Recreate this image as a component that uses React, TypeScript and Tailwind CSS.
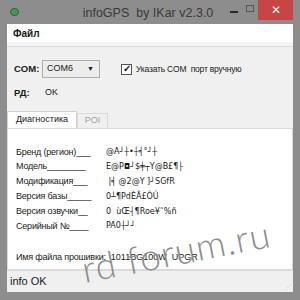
import React from 'react';

const rows = [
  ['Бренд (регион)___', '@A┘┼•┼╡°┘┼'],
  ['Модель________', 'E@P◘┘$╪┬Y@B£¶├'],
  ['Модификация___', ' |╡ @2@Y ]┘SGfR'],
  ['Версия базы_____', '0┴¶PdÈÂ£ÔÛ'],
  ['Версия озвучки__', '0  ùŒ┤¶Roe¥˜%ñ'],
  ['Серийный №____', 'PA0┼┘┘'],
];

const App = () => {
  return (
    <div className="relative w-[300px] h-[300px] overflow-hidden bg-[#8d8d8d] flex flex-col font-['Liberation_Sans',sans-serif] text-[#1a1a1a]">
      {/* title bar */}
      <div className="h-[24px] flex items-start shrink-0">
        <div className="mt-[8px] ml-[10px] w-[9px] h-[8px] rounded-full bg-[#3f9a4a] border border-[#2c6b33]" />
        <div className="flex-1 text-center text-[12.5px] leading-[26px] text-[#3a3a3a] pl-[52px]">infoGPS&nbsp; by IKar v2.3.0</div>
        <div className="w-[18px] mt-[11px] flex justify-center">
          <div className="w-[8px] h-[2px] bg-[#2a2a2a]" />
        </div>
        <div className="w-[14px] mt-[5px] flex justify-center">
          <div className="w-[8px] h-[7px] border border-[#555]" />
        </div>
        <div className="w-[35px] h-[20px] ml-[1px] mr-[7px] bg-[#c94545] flex items-center justify-center text-white text-[12px] leading-none">✕</div>
      </div>

      {/* client */}
      <div className="flex-1 mx-[7px] mb-[8px] bg-[#f0f0f0] flex flex-col text-[9px]">
        <div className="h-[18px] bg-white flex items-center pl-[6px] font-bold text-[10px]">Файл</div>
        <div className="h-[5px] border-b border-[#dcdcdc] bg-[#f4f4f4]" />

        <div className="flex items-center mt-[13px] pl-[7px] h-[18px]">
          <span className="font-bold w-[28px] text-[9.5px]">COM:</span>
          <div className="w-[58px] h-[18px] border border-[#acacac] bg-[#ececec] flex items-center justify-between pl-[4px] pr-[5px]">
            <span>COM6</span>
            <span className="text-[7px]">▼</span>
          </div>
          <div className="ml-[21px] w-[11px] h-[11px] border border-[#555] bg-white flex items-center justify-center text-[10px] leading-none font-bold">✓</div>
          <span className="ml-[4px] text-[8.5px] tracking-[-0.2px]">Указать COM&nbsp; порт вручную</span>
        </div>

        <div className="flex items-center mt-[8px] pl-[7px] h-[14px]">
          <span className="font-bold w-[31px] text-[9.5px]">РД:</span>
          <span>OK</span>
        </div>

        <div className="flex items-end mt-[11px] h-[17px]">
          <div className="h-[17px] w-[70px] bg-white border border-b-0 border-[#d0d0d0] flex items-center justify-center">Диагностика</div>
          <div className="h-[15px] w-[31px] bg-[#f0f0f0] border border-b-0 border-[#d9d9d9] flex items-center justify-center text-[#a0a0a0]">POI</div>
        </div>

        <div className="flex-1 bg-white border border-[#d9d9d9] pl-[8px] pt-[16px] flex flex-col">
          {rows.map(([k, v]) => (
            <div key={k} className="flex h-[14.8px] items-center">
              <span className="w-[90px] whitespace-nowrap tracking-[-0.2px]">{k}</span>
              <span className="whitespace-pre font-['DejaVu_Sans',sans-serif] text-[8px]">{v}</span>
            </div>
          ))}
          <div className="flex mt-[17px] items-center">
            <span className="mr-[5px] whitespace-nowrap tracking-[-0.2px]">Имя файла прошивки:</span>
            <span>1011BG100W&nbsp; UPGR</span>
          </div>
        </div>

        <div className="h-[22px] flex items-center pl-[3px] text-[11px] border-t border-[#dcdcdc] relative">
          info OK
          <div className="absolute right-[2px] bottom-[2px] text-[6px] text-[#bbb] leading-none">⋰</div>
        </div>
      </div>

      {/* watermark */}
      <div className="absolute left-[86px] top-[249px] h-[40px] leading-[40px] rotate-[-11deg] origin-bottom-left text-[37px] tracking-[1px] font-['Lato',sans-serif] font-light text-[#8e8e8e] whitespace-nowrap pointer-events-none">
        rd forum.ru
      </div>
    </div>
  );
};

export default App;
